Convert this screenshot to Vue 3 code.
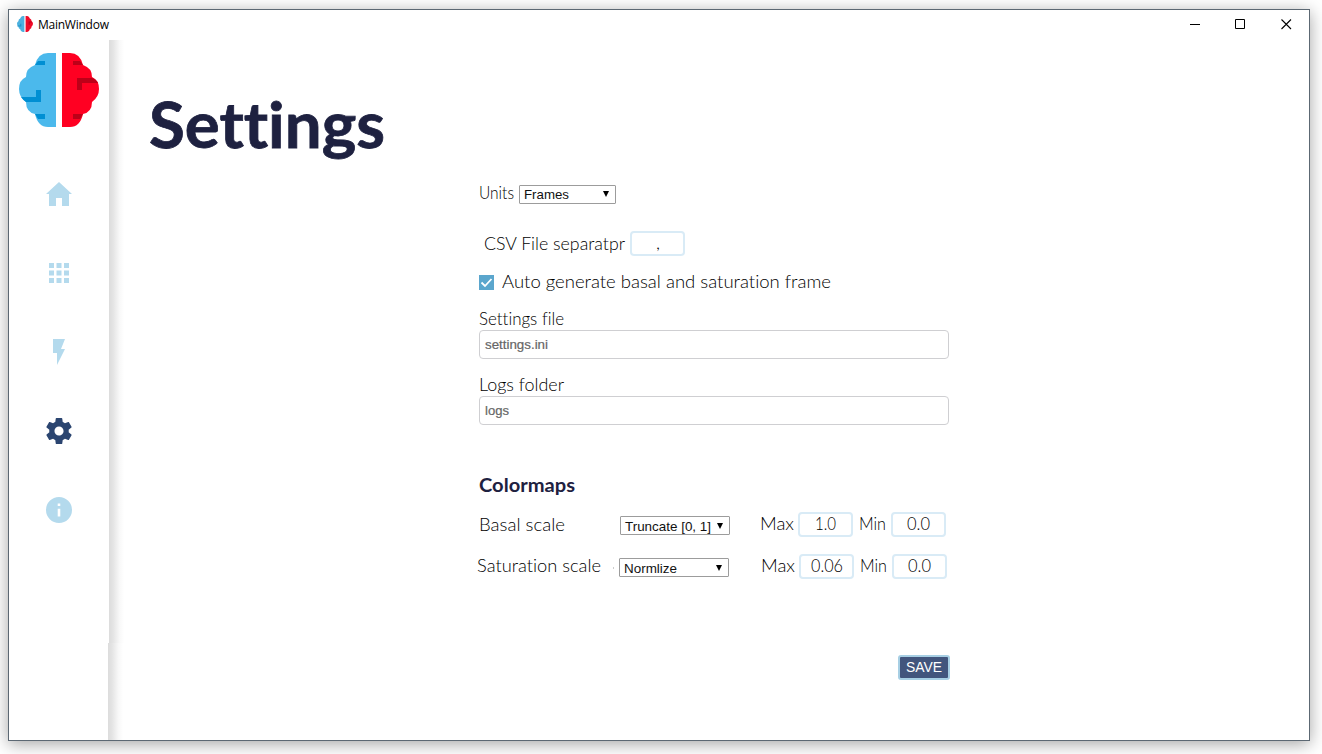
<script setup>
import { h } from 'vue'

const Line = (p) =>
  h('svg', { width: p.w, height: 24, class: 'line' }, [
    h('text', { x: 0, y: 17, textLength: p.w, lengthAdjust: 'spacingAndGlyphs' }, p.t),
  ])
Line.props = ['t', 'w']

const scales = [
  { name: 'Basal scale', w: 86, mode: 'Truncate [0, 1]', modeW: 86, max: '1.0', maxW: 21, min: '0.0' },
  { name: 'Saturation scale', w: 124, mode: 'Normlize', modeW: 53, max: '0.06', maxW: 32, min: '0.0' },
]
</script>

<template>
  <div class="desk">
    <div class="window">
      <header class="titlebar">
        <svg class="mini" width="16" height="16" viewBox="0 0 80 74" preserveAspectRatio="none">
          <path d="M37 0H29Q19 0 16 12Q7 15 7 24Q0 27 0 36Q0 44 7 49Q7 59 16 61Q19 74 29 74H37Z" fill="#4bb0de" />
          <path d="M43 0H51Q61 0 64 12Q73 15 73 24Q80 27 80 36Q80 44 73 49Q73 59 64 61Q61 74 51 74H43Z" fill="#f00a28" />
          <path d="M2 46H19V36" fill="none" stroke="#1b8fc8" stroke-width="5" />
          <path d="M61 41V28H74" fill="none" stroke="#bd0018" stroke-width="5" />
        </svg>
        <span class="caption"><svg width="72" height="18"><text x="0" y="13" textLength="71">MainWindow</text></svg></span>
        <svg class="controls" width="104" height="12" viewBox="0 0 104 12" fill="none" stroke="#000">
          <path d="M0 6.5H10M45.500 1.500H54.500V10.500H45.500Z" />
          <path d="M91.500 1.500L101 11M101 1.500L91.500 11" stroke-width="1.1" />
        </svg>
      </header>

      <div class="body">
        <nav class="sidebar">
          <svg class="logo" width="80" height="74" viewBox="0 0 80 74">
            <path d="M37 0H29Q19 0 16 12Q7 15 7 24Q0 27 0 36Q0 44 7 49Q7 59 16 61Q19 74 29 74H37Z" fill="#4bb9ec" />
            <path d="M43 0H51Q61 0 64 12Q73 15 73 24Q80 27 80 36Q80 44 73 49Q73 59 64 61Q61 74 51 74H43Z" fill="#ff0022" />
            <path d="M19 8H26V12H16ZM16 61H26V66H19ZM2 44H17V37H22V49H7Q4 47 2 44Z" fill="#008fd3" />
            <path d="M54 8H61L64 12H54ZM54 61H64L61 66H54ZM58 25H73Q77 26 79 30H63V37H58Z" fill="#bd0018" />
          </svg>
          <svg class="icon" viewBox="0 0 26 26"><path d="M13 1L26 13H23V25H16V17H10V25H3V13H0Z" /></svg>
          <svg class="icon" viewBox="0 0 26 26"><path d="M3 3h5v5h-5zM10.500 3h5v5h-5zM18 3h5v5h-5zM3 10.500h5v5h-5zM10.500 10.500h5v5h-5zM18 10.500h5v5h-5zM3 18h5v5h-5zM10.500 18h5v5h-5zM18 18h5v5h-5z" /></svg>
          <svg class="icon" viewBox="0 0 26 26"><path d="M7 0H19L15 10H19L11 26V14H7Z" /></svg>
          <svg class="icon active" viewBox="2 2 20 20"><path d="M19.430 12.980c.04-.32.070-.64.070-.98s-.03-.66-.07-.98l2.110-1.650c.19-.15.240-.42.120-.64l-2-3.460c-.12-.22-.39-.3-.61-.22l-2.490 1c-.52-.4-1.080-.73-1.690-.98l-.38-2.650C14.460 2.180 14.250 2 14 2h-4c-.25 0-.46.180-.49.420l-.38 2.650c-.61.250-1.170.590-1.690.980l-2.490-1c-.23-.09-.49 0-.61.220l-2 3.460c-.13.220-.07.490.120.640l2.110 1.650c-.04.320-.07.650-.07.980s.030.660.070.980l-2.110 1.650c-.19.150-.24.420-.12.640l2 3.460c.12.220.39.300.61.220l2.490-1c.52.400 1.080.730 1.690.980l.38 2.650c.03.240.24.420.49.420h4c.25 0 .46-.18.49-.42l.38-2.650c.61-.25 1.170-.59 1.690-.98l2.490 1c.23.090.49 0 .61-.22l2-3.460c.12-.22.070-.49-.12-.64l-2.110-1.650zM12 15.500c-1.930 0-3.500-1.570-3.500-3.500s1.570-3.500 3.500-3.500 3.500 1.570 3.500 3.500-1.570 3.500-3.500 3.500z" /></svg>
          <svg class="icon" viewBox="0 0 26 26"><path fill-rule="evenodd" d="M13 0a13 13 0 1 0 0 26a13 13 0 1 0 0-26zM11.700 6.500h2.600v2.600h-2.600zM11.700 11.700h2.600v7.800h-2.600z" /></svg>
        </nav>
        <div class="shade"><i class="upper"></i><i class="lower"></i></div>

        <main>
          <h1><svg width="240" height="84"><text x="-1" y="68" textLength="236" lengthAdjust="spacingAndGlyphs">Settings</text></svg></h1>
          <form @submit.prevent>
            <div class="row units">
              <Line t="Units" w="35" />
              <div class="select"><Line t="Frames" w="45" /><b></b></div>
            </div>
            <div class="row csv">
              <Line class="low" t="CSV File separatpr" w="141" />
              <div class="num"><Line t="," w="4" /></div>
            </div>
            <div class="row auto">
              <svg class="check" width="15" height="15"><rect width="15" height="15" fill="#5ba6cd" /><path d="M2.500 7.500L6 11L12.500 4" fill="none" stroke="#fff" stroke-width="1.8" /></svg>
              <Line class="low" t="Auto generate basal and saturation frame" w="329" />
            </div>
            <div class="row name"><Line t="Settings file" w="85" /></div>
            <div class="field"><Line t="settings.ini" w="63" /></div>
            <div class="row name logs"><Line t="Logs folder" w="85" /></div>
            <div class="field"><Line t="logs" w="24" /></div>
            <h2><Line t="Colormaps" w="96" /></h2>
            <div v-for="s in scales" :key="s.name" class="row scale">
              <div class="scale-name"><Line :t="s.name" :w="s.w" /></div>
              <div class="select wide"><Line :t="s.mode" :w="s.modeW" /><b></b></div>
              <Line class="max" t="Max" w="34" />
              <div class="num"><Line :t="s.max" :w="s.maxW" /></div>
              <Line class="min" t="Min" w="27" />
              <div class="num"><Line :t="s.min" w="23" /></div>
            </div>
            <button class="save"><Line t="SAVE" w="36" /></button>
          </form>
        </main>
      </div>
    </div>
  </div>
</template>

<style>
html, body { margin: 0; background: #fff; overflow: hidden; }
</style>

<style scoped>
* { box-sizing: border-box; }
.desk { width: 1322px; height: 754px; padding: 9px 12px 13px 8px; background: #fff; overflow: hidden; font-variant-ligatures: none; }
.window { width: 1302px; height: 732px; border: 1px solid #5c6873; background: #fff; box-shadow: 0 3px 16px rgba(0, 0, 0, .36); }
.titlebar { height: 30px; display: flex; align-items: center; padding-left: 8px; }
.mini { margin-top: -2px; }
.caption { margin-left: 5px; height: 18px; flex: 1; font: 12px "Open Sans", "Noto Sans", sans-serif; }
.caption svg { display: block; overflow: visible; }
.controls { margin-right: 15px; margin-top: -2px; }
.body { display: flex; height: 700px; }
.sidebar { width: 100px; display: flex; flex-direction: column; align-items: center; padding-top: 13px; }
.logo { flex: none; margin-bottom: 54px; }
.icon { width: 26px; height: 26px; flex: none; margin-bottom: 53px; fill: #b4daed; }
.icon.active { fill: #2b4570; }
.shade { width: 16px; display: flex; flex-direction: column; }
.shade i { background: linear-gradient(90deg, #dcdcdc, #e4e4e4 25%, #f8f8f8 65%, #fff 95%); }
.upper { height: 603px; }
.lower { flex: 1; margin-left: -1px; width: 16px; }
main { flex: 1; }
h1 { margin: 40px 0 0 25px; height: 104px; font: bold 64px Lato, sans-serif; font-variant-ligatures: none; fill: #1e2140; stroke: #1e2140; stroke-width: .8px; }
h1 svg { display: block; overflow: visible; }
form { margin-left: 354px; width: 471px; font: 300 17px Lato, sans-serif; font-variant-ligatures: none; fill: #000; }
.row { display: flex; align-items: center; height: 20px; }
.line { display: block; flex: none; overflow: visible; }
.low { margin-top: 2px; }
.units { gap: 5px; }
.select { width: 97px; height: 19px; border: 1px solid #9c9c9c; border-radius: 1px; display: flex; align-items: center; justify-content: space-between; padding: 0 6px 0 4px; font: 13px "Liberation Sans", Arial, sans-serif; fill: #111; }
.select b { border: 3.5px solid transparent; border-top: 6px solid #000; border-bottom: 0; }
.csv { height: 25px; margin-top: 27px; padding-left: 5px; gap: 5px; }
.num { width: 55px; height: 25px; border: 2px solid #d9ebf6; border-radius: 4px; display: flex; align-items: center; justify-content: center; }
.auto { margin-top: 16px; gap: 8px; }
.name { margin-top: 18px; }
.logs { margin-top: 17px; }
.field { width: 470px; height: 29px; border: 1px solid #cfcfd2; border-radius: 4px; display: flex; align-items: center; padding: 0 0 2px 5px; font: 13px "Liberation Sans", Arial, sans-serif; fill: #666; stroke: #666; stroke-width: .2px; }
h2 { margin: 52px 0 0; height: 20px; display: flex; align-items: center; font: bold 18px Lato, sans-serif; fill: #1e2140; }
.scale { height: 25px; margin-top: 15px; }
.scale + .scale { margin: 17px 0 0 1px; }
.scale-name { width: 141px; padding-top: 3px; }
.scale + .scale .scale-name { position: relative; width: 142px; margin-left: -3px; padding-top: 0; }
.scale + .scale .scale-name::after { content: ""; position: absolute; right: 5px; top: 12px; width: 1px; height: 2px; background: #ccc; }
.wide { width: 110px; margin-top: 2px; }
.max { margin: 0 4px 0 30px; }
.scale + .scale .max { margin-left: 32px; }
.min { margin: 0 5px 0 6px; }
.save { display: flex; align-items: center; justify-content: center; width: 52px; height: 25px; margin: 76px 0 0 419px; padding: 0 0 2px; border: 2px solid #a7cfe4; border-radius: 3px; background: #42557d; fill: #fff; font: 14px "Liberation Sans", Arial, sans-serif; }
</style>
